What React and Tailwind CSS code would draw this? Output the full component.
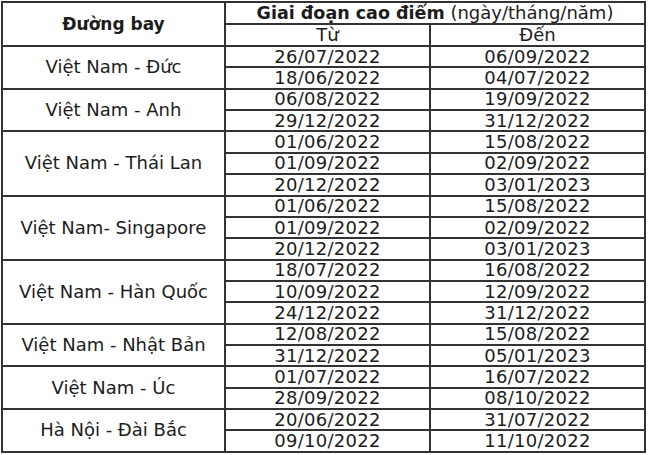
import React from 'react';

const routes = [
  {
    name: 'Việt Nam - Đức',
    dates: [
      ['26/07/2022', '06/09/2022'],
      ['18/06/2022', '04/07/2022'],
    ],
  },
  {
    name: 'Việt Nam - Anh',
    dates: [
      ['06/08/2022', '19/09/2022'],
      ['29/12/2022', '31/12/2022'],
    ],
  },
  {
    name: 'Việt Nam - Thái Lan',
    dates: [
      ['01/06/2022', '15/08/2022'],
      ['01/09/2022', '02/09/2022'],
      ['20/12/2022', '03/01/2023'],
    ],
  },
  {
    name: 'Việt Nam- Singapore',
    dates: [
      ['01/06/2022', '15/08/2022'],
      ['01/09/2022', '02/09/2022'],
      ['20/12/2022', '03/01/2023'],
    ],
  },
  {
    name: 'Việt Nam - Hàn Quốc',
    dates: [
      ['18/07/2022', '16/08/2022'],
      ['10/09/2022', '12/09/2022'],
      ['24/12/2022', '31/12/2022'],
    ],
  },
  {
    name: 'Việt Nam - Nhật Bản',
    dates: [
      ['12/08/2022', '15/08/2022'],
      ['31/12/2022', '05/01/2023'],
    ],
  },
  {
    name: 'Việt Nam - Úc',
    dates: [
      ['01/07/2022', '16/07/2022'],
      ['28/09/2022', '08/10/2022'],
    ],
  },
  {
    name: 'Hà Nội - Đài Bắc',
    dates: [
      ['20/06/2022', '31/07/2022'],
      ['09/10/2022', '11/10/2022'],
    ],
  },
];

const cell = 'border-2 border-[#333] p-0 text-center align-middle';

export default function App() {
  return (
    <div className="w-[650px] h-[455px] bg-white pt-[1px] pl-[1px] font-['DejaVu_Sans',sans-serif] text-[#1c1c1c]">
      <table className="border-collapse table-fixed w-[645px] text-[18px] leading-none">
        <colgroup>
          <col className="w-[223px]" />
          <col className="w-[205px]" />
          <col className="w-[215px]" />
        </colgroup>
        <thead>
          <tr className="h-[22px]">
            <th rowSpan={2} className={`${cell} font-bold text-[17px]`}>
              Đường bay
            </th>
            <th colSpan={2} className={`${cell} font-normal`}>
              <span className="font-bold text-[17.5px]">Giai đoạn cao điểm</span>{' '}
              <span>(ngày/tháng/năm)</span>
            </th>
          </tr>
          <tr className="h-[22px]">
            <th className={`${cell} font-normal`}>Từ</th>
            <th className={`${cell} font-normal`}>Đến</th>
          </tr>
        </thead>
        <tbody>
          {routes.map((route) =>
            route.dates.map((d, i) => (
              <tr key={route.name + i} className="h-[21.37px]">
                {i === 0 && (
                  <td rowSpan={route.dates.length} className={cell}>
                    {route.name}
                  </td>
                )}
                <td className={`${cell} tracking-[0.3px]`}>{d[0]}</td>
                <td className={`${cell} tracking-[0.3px]`}>{d[1]}</td>
              </tr>
            ))
          )}
        </tbody>
      </table>
    </div>
  );
}
